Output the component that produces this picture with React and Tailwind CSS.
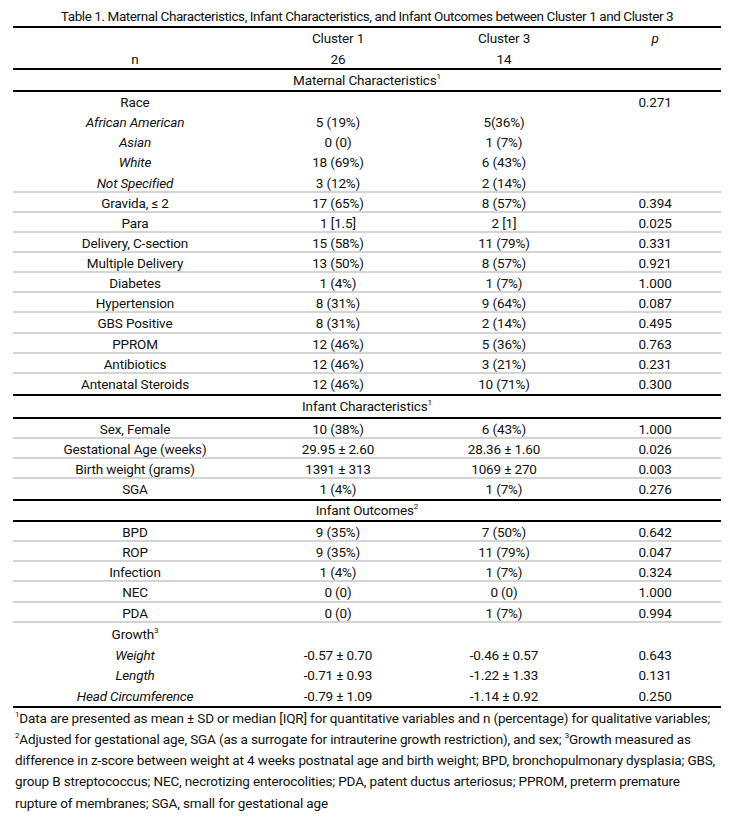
const font = { fontFamily: 'Roboto, "Noto Sans", sans-serif' };

const maternal = [
  ["Gravida, ≤ 2", "17 (65%)", "8 (57%)", "0.394"],
  ["Para", "1 [1.5]", "2 [1]", "0.025"],
  ["Delivery, C-section", "15 (58%)", "11 (79%)", "0.331"],
  ["Multiple Delivery", "13 (50%)", "8 (57%)", "0.921"],
  ["Diabetes", "1 (4%)", "1 (7%)", "1.000"],
  ["Hypertension", "8 (31%)", "9 (64%)", "0.087"],
  ["GBS Positive", "8 (31%)", "2 (14%)", "0.495"],
  ["PPROM", "12 (46%)", "5 (36%)", "0.763"],
  ["Antibiotics", "12 (46%)", "3 (21%)", "0.231"],
  ["Antenatal Steroids", "12 (46%)", "10 (71%)", "0.300"],
];

const infant = [
  ["Sex, Female", "10 (38%)", "6 (43%)", "1.000"],
  ["Gestational Age (weeks)", "29.95 ± 2.60", "28.36 ± 1.60", "0.026"],
  ["Birth weight (grams)", "1391 ± 313", "1069 ± 270", "0.003"],
  ["SGA", "1 (4%)", "1 (7%)", "0.276"],
];

const outcomes = [
  ["BPD", "9 (35%)", "7 (50%)", "0.642"],
  ["ROP", "9 (35%)", "11 (79%)", "0.047"],
  ["Infection", "1 (4%)", "1 (7%)", "0.324"],
  ["NEC", "0 (0)", "0 (0)", "1.000"],
  ["PDA", "0 (0)", "1 (7%)", "0.994"],
];

const growth = [
  ["Weight", "-0.57 ± 0.70", "-0.46 ± 0.57", "0.643"],
  ["Length", "-0.71 ± 0.93", "-1.22 ± 1.33", "0.131"],
  ["Head Circumference", "-0.79 ± 1.09", "-1.14 ± 0.92", "0.250"],
];

function Row({ cells, italic, line, h = "h-[20.13px]" }) {
  return (
    <div
      className={`grid grid-cols-[244px_162px_170px_132px] items-center text-center ${h} ${
        line ? "border-b-2 border-[#d4d4d4]" : ""
      }`}
    >
      <div className={italic ? "italic" : ""}>{cells[0]}</div>
      <div>{cells[1]}</div>
      <div>{cells[2]}</div>
      <div>{cells[3]}</div>
    </div>
  );
}

function Thick() {
  return <div className="h-[2px] bg-black" />;
}

function Section({ children, h = "h-[20px]" }) {
  return <div className={`flex items-center justify-center ${h}`}>{children}</div>;
}

function Sup({ children }) {
  return <sup className="text-[8px] -top-[0.75em]">{children}</sup>;
}

export default function App() {
  return (
    <div
      className="bg-white w-[742px] h-[826px] pt-[7px] text-[13.5px] tracking-[-0.15px] text-[#111]"
      style={font}
    >
      <div className="mx-[13px] w-[708px]">
        <div className="h-[19px] leading-[19px] text-center tracking-[-0.42px]">
          Table 1. Maternal Characteristics, Infant Characteristics, and Infant Outcomes between Cluster 1 and Cluster 3
        </div>
        <Thick />
        <Row cells={["", "Cluster 1", "Cluster 3", <i>p</i>]} h="h-[21px]" />
        <Row cells={["n", "26", "14", ""]} h="h-[19px]" />
        <Thick />
        <Section>
          <span>
            Maternal Characteristics<Sup>1</Sup>
          </span>
        </Section>
        <Thick />
        <Row cells={["Race", "", "", "0.271"]} />
        <Row cells={["African American", "5 (19%)", "5(36%)", ""]} italic />
        <Row cells={["Asian", "0 (0)", "1 (7%)", ""]} italic />
        <Row cells={["White", "18 (69%)", "6 (43%)", ""]} italic />
        <Row cells={["Not Specified", "3 (12%)", "2 (14%)", ""]} italic line />
        {maternal.map((r, i) => (
          <Row key={r[0]} cells={r} line={i < maternal.length - 1} />
        ))}
        <Thick />
        <Section h="h-[21px]">
          <span>
            Infant Characteristics<Sup>1</Sup>
          </span>
        </Section>
        <Thick />
        {infant.map((r, i) => (
          <Row key={r[0]} cells={r} line={i < infant.length - 1} h="h-[20px]" />
        ))}
        <Thick />
        <Section h="h-[19px]">
          <span>
            Infant Outcomes<Sup>2</Sup>
          </span>
        </Section>
        <Thick />
        {outcomes.map((r) => (
          <Row key={r[0]} cells={r} line h="h-[20.2px]" />
        ))}
        <Row
          cells={[
            <span>
              Growth<Sup>3</Sup>
            </span>,
            "",
            "",
            "",
          ]}
          h="h-[22px]"
        />
        {growth.map((r) => (
          <Row key={r[0]} cells={r} italic h="h-[20.33px]" />
        ))}
        <Thick />
        <div className="leading-[21.2px] whitespace-nowrap pl-[2px]">
          <div>
            <Sup>1</Sup>Data are presented as mean ± SD or median [IQR] for quantitative variables and n (percentage) for qualitative variables;
          </div>
          <div>
            <Sup>2</Sup>Adjusted for gestational age, SGA (as a surrogate for intrauterine growth restriction), and sex; <Sup>3</Sup>Growth measured as
          </div>
          <div>
            difference in z-score between weight at 4 weeks postnatal age and birth weight; BPD, bronchopulmonary dysplasia; GBS,
          </div>
          <div>
            group B streptococcus; NEC, necrotizing enterocolities; PDA, patent ductus arteriosus; PPROM, preterm premature
          </div>
          <div>rupture of membranes; SGA, small for gestational age</div>
        </div>
      </div>
    </div>
  );
}
